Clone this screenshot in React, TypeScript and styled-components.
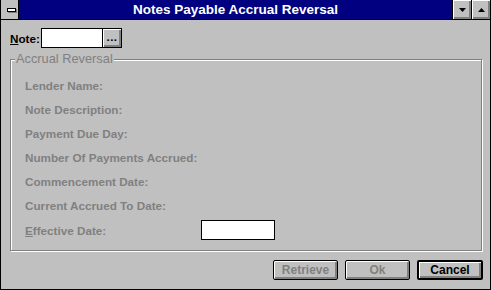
import React from "react";
import styled, { createGlobalStyle } from "styled-components";

const Global = createGlobalStyle`
  html, body { margin: 0; padding: 0; background: #c0c0c0; }
  body { font-family: "Liberation Sans", Arial, sans-serif; }
`;

const Window = styled.div`
  box-sizing: border-box;
  width: 491px;
  height: 290px;
  border: 1px solid #000;
  border-top: 0;
  background: #c0c0c0;
  display: flex;
  flex-direction: column;
  font-family: "Liberation Sans", Arial, sans-serif;
`;

const TitleBar = styled.div`
  flex: none;
  display: flex;
  height: 20px;
  box-sizing: border-box;
  border-bottom: 1px solid #000;
`;

const SysBox = styled.div`
  box-sizing: border-box;
  width: 18px;
  border-right: 1px solid #000;
  background: #c0c0c0;
  display: flex;
  align-items: center;
  padding-left: 6px;
`;

const SysBar = styled.div`
  width: 9px;
  height: 4px;
  box-sizing: border-box;
  border: 1px solid #000;
  background: #fff;
  box-shadow: 1px 1px 0 #808080;
`;

const Title = styled.div`
  flex: 1;
  background: #000080;
  color: #fff;
  font-weight: bold;
  font-size: 13.5px;
  display: flex;
  align-items: center;
  justify-content: center;
`;

const CapButton = styled.div`
  width: 18px;
  border-left: 1px solid #000;
  background: #c0c0c0;
  box-shadow: inset 1px 1px #fff, inset -1px -1px #808080, inset -2px -2px #808080;
  display: flex;
  align-items: center;
  justify-content: center;
`;

const Body = styled.div`
  flex: 1;
  display: flex;
  flex-direction: column;
`;

const NoteRow = styled.div`
  display: flex;
  align-items: center;
  height: 20px;
  margin: 8px 0 0 9px;
`;

const Label = styled.span<{ $disabled?: boolean }>`
  font-weight: bold;
  font-size: 11.7px;
  color: ${(p) => (p.$disabled ? "#808080" : "#000")};
  white-space: nowrap;
`;

const NoteLabel = styled(Label)`
  width: 31px;
`;

const Mnemonic = styled.span`
  text-decoration: underline;
`;

const TextBox = styled.div<{ $width: number }>`
  box-sizing: border-box;
  width: ${(p) => p.$width}px;
  height: 20px;
  border: 1px solid #000;
  background: #fff;
`;

const DotsButton = styled.div`
  box-sizing: border-box;
  width: 19px;
  height: 20px;
  border: 1px solid #000;
  border-left: 0;
  background: #c0c0c0;
  box-shadow: inset 1px 1px #fff, inset -1px -1px #808080, inset -2px -2px #808080;
  display: flex;
  align-items: center;
  justify-content: center;
  font-weight: bold;
  font-size: 11.5px;
  padding-bottom: 2px;
  letter-spacing: 0.5px;
`;

const Group = styled.fieldset`
  margin: 4px 8px 0 9px;
  padding: 0;
  border: 1px solid #808080;
  box-shadow: 1px 1px 0 #fff, inset 1px 1px 0 #fff;
  min-width: 0;
`;

const Legend = styled.legend`
  margin-left: 4px;
  padding: 0 1px;
  font-size: 12.8px;
  line-height: 14px;
  color: #808080;
  background: #c0c0c0;
`;

const Fields = styled.div`
  display: flex;
  flex-direction: column;
  padding: 7px 0 10px 14px;
`;

const FieldRow = styled.div<{ $input?: boolean }>`
  display: grid;
  grid-template-columns: 176px auto;
  align-items: center;
  height: ${(p) => (p.$input ? "20px" : "24px")};
  margin-top: ${(p) => (p.$input ? "3px" : "0")};
`;

const ButtonRow = styled.div`
  display: flex;
  justify-content: flex-end;
  gap: 7px;
  margin-top: 9px;
  padding-right: 7px;
`;

const PushButton = styled.div<{ $default?: boolean; $disabled?: boolean }>`
  box-sizing: border-box;
  width: ${(p) => (p.$default ? "66px" : "65px")};
  height: 20px;
  border: ${(p) => (p.$default ? "2px" : "1px")} solid #000;
  border-radius: 2px;
  background: #c0c0c0;
  box-shadow: inset 1px 1px #fff, inset -1px -1px #808080, inset -2px -2px #808080;
  display: flex;
  align-items: center;
  justify-content: center;
  font-weight: bold;
  font-size: 12px;
  color: ${(p) => (p.$disabled ? "#808080" : "#000")};
`;

const Triangle = ({ up }: { up?: boolean }) => (
  <svg width="7" height="4" viewBox="0 0 7 4">
    <polygon points={up ? "3.5,0 7,4 0,4" : "0,0 7,0 3.5,4"} fill="#000" />
  </svg>
);

const fields = [
  "Lender Name:",
  "Note Description:",
  "Payment Due Day:",
  "Number Of Payments Accrued:",
  "Commencement Date:",
  "Current Accrued To Date:",
];

export default function App() {
  return (
    <>
      <Global />
      <Window>
        <TitleBar>
          <SysBox>
            <SysBar />
          </SysBox>
          <Title>Notes Payable Accrual Reversal</Title>
          <CapButton>
            <Triangle />
          </CapButton>
          <CapButton>
            <Triangle up />
          </CapButton>
        </TitleBar>
        <Body>
          <NoteRow>
            <NoteLabel>
              <Mnemonic>N</Mnemonic>ote:
            </NoteLabel>
            <TextBox $width={62} />
            <DotsButton>...</DotsButton>
          </NoteRow>
          <Group>
            <Legend>Accrual Reversal</Legend>
            <Fields>
              {fields.map((f) => (
                <FieldRow key={f}>
                  <Label $disabled>{f}</Label>
                </FieldRow>
              ))}
              <FieldRow $input>
                <Label $disabled>
                  <Mnemonic>E</Mnemonic>ffective Date:
                </Label>
                <TextBox $width={74} />
              </FieldRow>
            </Fields>
          </Group>
          <ButtonRow>
            <PushButton $disabled>Retrieve</PushButton>
            <PushButton $disabled>Ok</PushButton>
            <PushButton $default>Cancel</PushButton>
          </ButtonRow>
        </Body>
      </Window>
    </>
  );
}
